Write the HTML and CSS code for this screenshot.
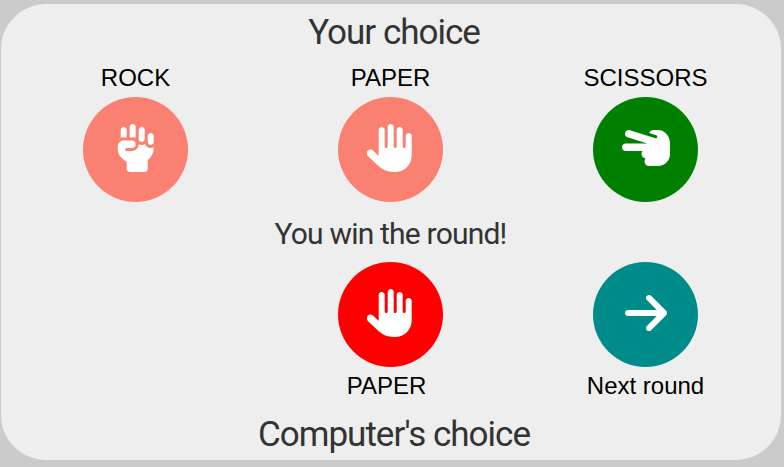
FILE: index.html
```html
<!DOCTYPE html>
<html lang="en">
<head>
<meta charset="utf-8">
<title>Rock Paper Scissors</title>
<link rel="stylesheet" href="styles.css">
</head>
<body>
<svg class="symbols" aria-hidden="true">
  <symbol id="hand" viewBox="0 0 512 512"><path d="M288 32c0-17.7-14.3-32-32-32s-32 14.3-32 32V240c0 8.8-7.2 16-16 16s-16-7.2-16-16V64c0-17.7-14.3-32-32-32s-32 14.3-32 32V336c0 1.5 0 3.1 .1 4.6L67.6 283c-16-15.2-41.3-14.6-56.6 1.4s-14.6 41.3 1.4 56.6L124.8 448c43.1 41.1 100.4 64 160 64H304c97.2 0 176-78.8 176-176V128c0-17.7-14.3-32-32-32s-32 14.3-32 32V240c0 8.8-7.2 16-16 16s-16-7.2-16-16V64c0-17.7-14.3-32-32-32s-32 14.3-32 32V240c0 8.8-7.2 16-16 16s-16-7.2-16-16V32z"/></symbol>
</svg>
<main class="game">
  <h1 class="title">Your choice</h1>
  <section class="row">
    <div class="choice">
      <span class="label">ROCK</span>
      <button class="disc salmon"><svg class="icon narrow nudge" viewBox="0 0 448 512"><path d="M192 0c17.7 0 32 14.3 32 32V144H160V32c0-17.7 14.3-32 32-32zM64 64c0-17.7 14.3-32 32-32s32 14.3 32 32v80H64V64zm192 0c0-17.7 14.3-32 32-32s32 14.3 32 32v96c0 17.7-14.3 32-32 32s-32-14.3-32-32V64zm96 64c0-17.7 14.3-32 32-32s32 14.3 32 32v64c0 17.7-14.3 32-32 32s-32-14.3-32-32V128zm-96 88l0-.6c9.4 5.4 20.3 8.6 32 8.6c13.2 0 25.4-4 35.6-10.8c8.7 24.9 32.5 42.8 60.4 42.8c11.7 0 22.6-3.1 32-8.6V256c0 52.3-25.1 98.8-64 128v96c0 17.7-14.3 32-32 32H160c-17.7 0-32-14.3-32-32V401.6c-17.3-7.9-33.2-18.8-46.9-32.5L69.5 357.5C45.5 333.5 32 300.9 32 267V240c0-35.3 28.7-64 64-64h88c22.1 0 40 17.9 40 40s-17.9 40-40 40H128c-8.8 0-16 7.2-16 16s7.2 16 16 16h56c39.8 0 72-32.2 72-72z"/></svg></button>
    </div>
    <div class="choice">
      <span class="label">PAPER</span>
      <button class="disc salmon"><svg class="icon nudge"><use href="#hand"/></svg></button>
    </div>
    <div class="choice">
      <span class="label">SCISSORS</span>
      <button class="disc green"><svg class="icon" viewBox="0 0 512 512"><path d="M40 208C17.9 208 0 225.9 0 248s17.9 40 40 40l180.2 0c-7.6 8.5-12.2 19.7-12.2 32c0 25.3 19.5 46 44.3 47.9c-7.7 8.5-12.3 19.8-12.3 32.1c0 26.5 21.5 48 48 48l32 0 64 0c70.7 0 128-57.3 128-128l0-113.1c0-40.2-16-78.8-44.4-107.3C444.8 76.8 413.9 64 381.7 64L336 64c-21.3 0-39.3 13.9-45.6 33.1l74.5 23.7c8.4 2.7 13.1 11.7 10.4 20.1s-11.7 13.1-20.1 10.4L288 129.9c0 .1 0 .1 0 .2L84 65.8C62.9 59.2 40.5 70.9 33.8 92s5.1 43.5 26.2 50.2L269.5 208 40 208z"/></svg></button>
    </div>
  </section>
  <h2 class="result">You win the round!</h2>
  <section class="row">
    <div class="choice"></div>
    <div class="choice">
      <button class="disc red"><svg class="icon nudge"><use href="#hand"/></svg></button>
      <span class="label computer">PAPER</span>
    </div>
    <div class="choice">
      <button class="disc teal"><svg class="icon narrow" viewBox="0 0 448 512"><path d="M438.6 278.6c12.5-12.5 12.5-32.8 0-45.3l-160-160c-12.5-12.5-32.8-12.5-45.3 0s-12.5 32.8 0 45.3L338.8 224 32 224c-17.7 0-32 14.3-32 32s14.3 32 32 32l306.7 0L233.4 393.4c-12.5 12.5-12.5 32.8 0 45.3s32.8 12.5 45.3 0l160-160z"/></svg></button>
      <span class="label">Next round</span>
    </div>
  </section>
  <h1 class="title bottom">Computer's choice</h1>
</main>
</body>
</html>
```
FILE: styles.css
```css
* { box-sizing: border-box; }
body {
  margin: 0;
  padding: 4px 3px 7px 1px;
  height: 467px;
  overflow: hidden;
  background: #cbcbcb;
  font-family: "Liberation Sans", Arial, sans-serif;
}
.symbols { display: none; }
.game {
  height: 456px;
  padding: 0 8px 0 7px;
  border-radius: 45px;
  background: #eee;
}
.title, .result {
  margin: 0;
  color: #333;
  font-family: Roboto, sans-serif;
  font-weight: 400;
  text-align: center;
  white-space: nowrap;
}
.title {
  height: 59px;
  padding-left: 7px;
  font-size: 35px;
  line-height: 57px;
  letter-spacing: -1px;
}
.result {
  height: 60px;
  font-size: 30px;
  line-height: 63px;
  letter-spacing: -0.8px;
}
.row { display: grid; grid-template-columns: repeat(3, 1fr); }
.choice { display: flex; flex-direction: column; align-items: center; }
.label { height: 34px; font-size: 24px; line-height: 30px; color: #000; }
.disc + .label { height: 42px; line-height: 38px; }
.computer { padding-right: 8px; }
.disc {
  display: flex;
  align-items: center;
  justify-content: center;
  width: 105px;
  height: 105px;
  padding: 0 0 3px;
  border: 0;
  border-radius: 50%;
  color: #fff;
}
.salmon { background: salmon; }
.green { background: green; }
.red { background: red; }
.teal { background: darkcyan; }
.icon { width: 48px; height: 48px; fill: currentColor; }
.narrow { width: 42px; }
.nudge { transform: translateX(-0.3px); }
.bottom { height: 48px; line-height: 51px; }
```
